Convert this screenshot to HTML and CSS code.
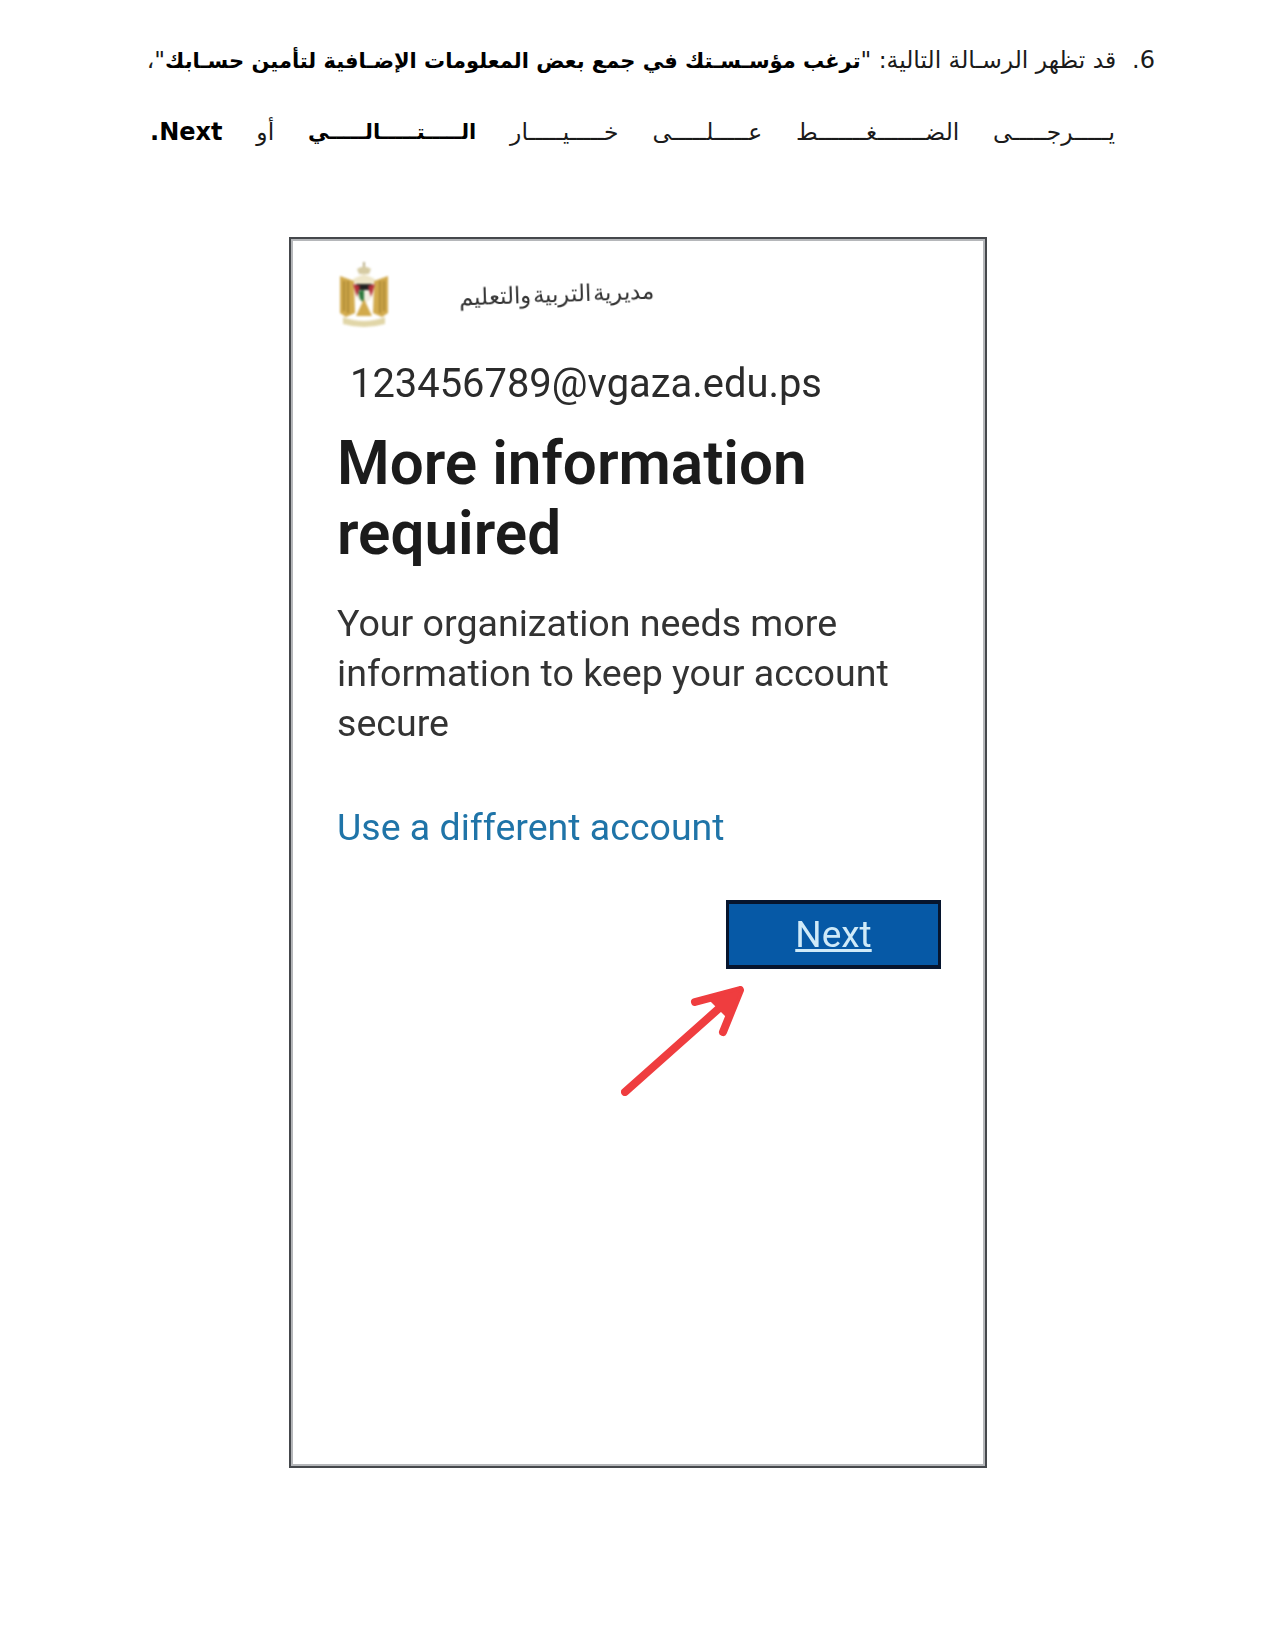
FILE: index.html
```html
<!DOCTYPE html>
<html lang="ar">
<head>
<meta charset="utf-8">
<title>More information required</title>
<link rel="stylesheet" href="styles.css">
</head>
<body>
<main class="page">
  <p class="step" dir="rtl"><span class="num" dir="ltr">.6</span><span>قد تظهر الرسـالة التالية: "<b>ترغب مؤسـسـتك في جمع بعض المعلومات الإضـافية لتأمين حسـابك</b>"،</span></p>
  <p class="step-two" dir="rtl">
    <span>يـــــرجـــــى</span><span>الضـــــــغـــــــط</span><span>عـــــلـــــى</span><span>خـــــيـــــار</span><b>الـــــتـــــالـــــي</b><span>أو</span><b dir="ltr" class="latin"><span class="dot">.</span>Next</b>
  </p>
  <section class="phone">
    <div class="brand">
      <svg class="emblem" viewBox="0 0 50 68" aria-hidden="true">
        <path d="M25 1v7" stroke="#b9ad85" stroke-width="2" fill="none"/>
        <path d="M18 8q7-5 14 0l-2 5H20z" fill="#d6cba3"/>
        <path d="M1 15 15 20 16 52 7 56 1 52z" fill="#d2aa4c"/>
        <path d="M49 15 35 20 34 52 43 56 49 52z" fill="#d2aa4c"/>
        <path d="M5 20v30M9 20v32M45 20v30M41 20v32" stroke="#9a7a2a" stroke-width="1.3"/>
        <path d="M14 18 25 13 36 18 33 24H17z" fill="#eee6c9"/>
        <path d="M14 23H36L32 38 25 43 18 38z" fill="#f2eee0"/>
        <path d="M17 23H33L31 29H19z" fill="#222"/>
        <path d="M25 29 19 30 21 38 25 42z" fill="#2f7a3e"/>
        <path d="M14 23 21 25 18 36z" fill="#b5303a"/>
        <path d="M36 23 29 25 32 36z" fill="#b5303a"/>
        <path d="M25 38 17 55H33z" fill="#d2aa4c"/>
        <path d="M4 56q21 8 42 0v7q-21 6-42 0z" fill="#e1d6a8"/>
      </svg>
      <span class="ministry" dir="rtl">مديرية التربية والتعليم</span>
    </div>
    <div class="email">123456789@vgaza.edu.ps</div>
    <h1 class="title">More information required</h1>
    <p class="desc">Your organization needs more information to keep your account secure</p>
    <a class="link" href="#">Use a different account</a>
    <div class="actions">
      <a class="next" href="#">Next</a>
      <svg class="arrow" viewBox="0 0 130 116" aria-hidden="true">
        <path d="M7 108 116 11M77 18 122 6 105 48" fill="none" stroke="#ef3d3f" stroke-width="8" stroke-linecap="round" stroke-linejoin="round"/>
        <path d="M90 15 122 6 111 36z" fill="#ef3d3f"/>
      </svg>
    </div>
  </section>
</main>
</body>
</html>
```
FILE: styles.css
```css
* { box-sizing: border-box; }
html, body { margin: 0; background: #fff; }
body { font-family: "DejaVu Sans", "Noto Sans", sans-serif; color: #111; }
.page { width: 1275px; height: 1650px; padding-top: 44px; overflow: hidden; }
.step, .step-two { margin: 0; font-size: 23.4px; line-height: 32px; color: #1a1a1a; }
.step { display: flex; gap: 16px; padding: 0 120px 0 150px; white-space: nowrap; }
.step b { color: #000; font-size: 21px; }
.num { font-size: 24px; }
.step-two { display: flex; justify-content: space-between; margin-top: 39px; padding: 0 160px 0 150px; white-space: nowrap; }
.step-two b { color: #000; font-size: 21px; }
.step-two .latin { font-size: 24px; }
.phone { width: 698px; height: 1231px; margin: 89px 0 0 289px; border: 2px solid #45484c; box-shadow: inset 0 0 0 2px #b5b7ba; padding: 21px 44px 0 46px; font-family: Roboto, sans-serif; color: #1f1f1f; }
.brand { display: flex; align-items: center; gap: 70px; height: 70px; padding-left: 2px; }
.emblem { width: 50px; height: 68px; flex: none; filter: blur(.8px); }
.ministry { font-family: "DejaVu Serif", serif; font-size: 22.6px; color: #333; letter-spacing: -1px; word-spacing: -5px; transform: rotate(-2deg) translateY(-1px); filter: blur(.5px); }
.email { margin: 31px 0 0 13px; font-size: 39.9px; line-height: 46px; color: #2b2b2b; filter: blur(.4px); }
.title { margin: 22px 0 0; font-size: 60.2px; line-height: 70px; font-weight: 600; color: #1b1b1b; filter: blur(.4px); }
.desc { margin: 29px 0 0; font-size: 37.6px; line-height: 50px; color: #333; width: 570px; filter: blur(.4px); }
.link { display: block; margin-top: 54px; font-size: 37.5px; line-height: 50px; color: #1f74a8; text-decoration: none; filter: blur(.4px); }
.actions { position: relative; margin-top: 48px; display: flex; justify-content: flex-end; }
.next { display: block; width: 215px; height: 69px; background: #0659a6; border: 4px solid #06152e; border-width: 4px 3px; color: #cfeaf8; font-size: 37px; line-height: 61px; text-align: center; filter: blur(.4px); }
.arrow { position: absolute; left: 281px; top: 84px; width: 130px; height: 116px; filter: blur(.5px); }
```
